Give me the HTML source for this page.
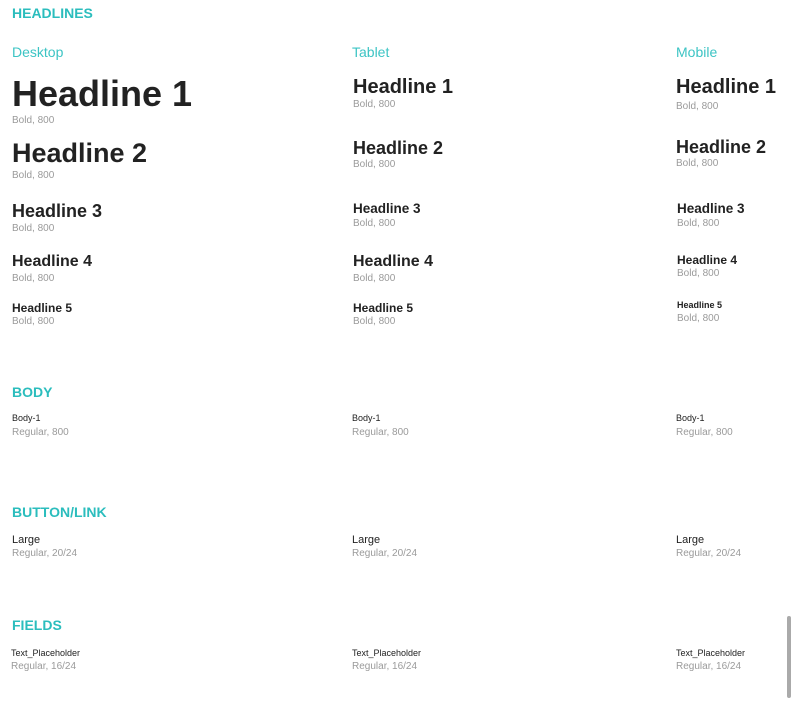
<!DOCTYPE html>
<html><head><meta charset="utf-8"><style>
html,body{margin:0;padding:0;background:#fff;width:792px;height:724px;overflow:hidden;position:relative;font-family:"Liberation Sans",sans-serif}
#w{position:absolute;left:0;top:2px;width:792px;height:724px}
div{position:absolute;line-height:1;white-space:nowrap}
.s{color:#2bbdbd;font-size:14px;font-weight:bold}
.c{color:#3cc4c4;font-size:14px}
.h{color:#222;font-weight:bold}
.g{color:#9a9a9a;font-size:10px}
.t{color:#222;font-size:9px}
.sb{left:787px;top:616px;width:4px;height:82px;background:#aaa;border-radius:2px}
</style></head><body>
<div id="w">
<div class="s" style="left:12px;top:4px">HEADLINES</div>
<div class="c" style="left:12px;top:43px">Desktop</div>
<div class="c" style="left:352px;top:43px">Tablet</div>
<div class="c" style="left:676px;top:43px">Mobile</div>

<div class="h" style="left:12px;top:74px;font-size:36px">Headline 1</div>
<div class="g" style="left:12px;top:114px">Bold, 800</div>
<div class="h" style="left:12px;top:138px;font-size:27px">Headline 2</div>
<div class="g" style="left:12px;top:169px">Bold, 800</div>
<div class="h" style="left:12px;top:200px;font-size:18px">Headline 3</div>
<div class="g" style="left:12px;top:222px">Bold, 800</div>
<div class="h" style="left:12px;top:252px;font-size:16px">Headline 4</div>
<div class="g" style="left:12px;top:272px">Bold, 800</div>
<div class="h" style="left:12px;top:300px;font-size:12px">Headline 5</div>
<div class="g" style="left:12px;top:315px">Bold, 800</div>

<div class="h" style="left:353px;top:75px;font-size:20px">Headline 1</div>
<div class="g" style="left:353px;top:98px">Bold, 800</div>
<div class="h" style="left:353px;top:137px;font-size:18px">Headline 2</div>
<div class="g" style="left:353px;top:158px">Bold, 800</div>
<div class="h" style="left:353px;top:200px;font-size:13.5px">Headline 3</div>
<div class="g" style="left:353px;top:217px">Bold, 800</div>
<div class="h" style="left:353px;top:252px;font-size:16px">Headline 4</div>
<div class="g" style="left:353px;top:272px">Bold, 800</div>
<div class="h" style="left:353px;top:300px;font-size:12px">Headline 5</div>
<div class="g" style="left:353px;top:315px">Bold, 800</div>

<div class="h" style="left:676px;top:75px;font-size:20px">Headline 1</div>
<div class="g" style="left:676px;top:100px">Bold, 800</div>
<div class="h" style="left:676px;top:136px;font-size:18px">Headline 2</div>
<div class="g" style="left:676px;top:157px">Bold, 800</div>
<div class="h" style="left:677px;top:200px;font-size:13.5px">Headline 3</div>
<div class="g" style="left:677px;top:217px">Bold, 800</div>
<div class="h" style="left:677px;top:252px;font-size:12px">Headline 4</div>
<div class="g" style="left:677px;top:267px">Bold, 800</div>
<div class="h" style="left:677px;top:299px;font-size:9px">Headline 5</div>
<div class="g" style="left:677px;top:312px">Bold, 800</div>

<div class="s" style="left:12px;top:383px">BODY</div>
<div class="t" style="left:12px;top:412px">Body-1</div>
<div class="g" style="left:12px;top:426px">Regular, 800</div>
<div class="t" style="left:352px;top:412px">Body-1</div>
<div class="g" style="left:352px;top:426px">Regular, 800</div>
<div class="t" style="left:676px;top:412px">Body-1</div>
<div class="g" style="left:676px;top:426px">Regular, 800</div>

<div class="s" style="left:12px;top:503px">BUTTON/LINK</div>
<div class="t" style="left:12px;top:533px;font-size:11px">Large</div>
<div class="g" style="left:12px;top:547px">Regular, 20/24</div>
<div class="t" style="left:352px;top:533px;font-size:11px">Large</div>
<div class="g" style="left:352px;top:547px">Regular, 20/24</div>
<div class="t" style="left:676px;top:533px;font-size:11px">Large</div>
<div class="g" style="left:676px;top:547px">Regular, 20/24</div>

<div class="s" style="left:12px;top:616px">FIELDS</div>
<div class="t" style="left:11px;top:647px">Text_Placeholder</div>
<div class="g" style="left:11px;top:660px">Regular, 16/24</div>
<div class="t" style="left:352px;top:647px">Text_Placeholder</div>
<div class="g" style="left:352px;top:660px">Regular, 16/24</div>
<div class="t" style="left:676px;top:647px">Text_Placeholder</div>
<div class="g" style="left:676px;top:660px">Regular, 16/24</div>
</div>
<div class="sb"></div>
</body></html>
